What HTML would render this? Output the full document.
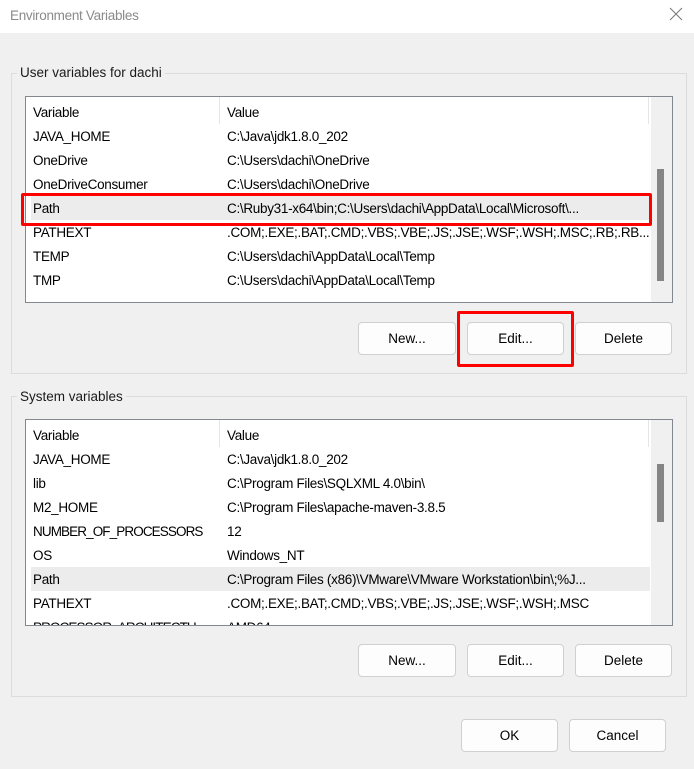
<!DOCTYPE html><html><head><style>
*{box-sizing:border-box;margin:0;padding:0}
body{width:694px;height:769px;background:#f0f0f0;font-family:"Liberation Sans",sans-serif;font-size:13.5px;color:#000;position:relative;overflow:hidden}
.a{position:absolute}
.title{left:0;top:0;width:694px;height:33px;background:#fff}
.group{border:1px solid #dcdcdc}
.legend{background:#f0f0f0;padding:0 3px;font-size:13.5px;color:#1a1a1a}
.list{background:#fff;border:1px solid #828790;overflow:hidden}
.row{position:absolute;left:5px;height:24px;line-height:26px;white-space:nowrap;width:620px;letter-spacing:-0.3px}
.row span{position:absolute;top:0}
.row .v{left:2px}.row .w{left:196px;width:424px;overflow:hidden}
.sb{background:#f0f0f0}
.btn{background:#fdfdfd;border:1px solid #d0d0d0;border-radius:4px;text-align:center;line-height:32px;font-size:13.5px}
.red{border:3px solid #ff0000;border-radius:2px}
</style></head><body>
<div class="a title"></div>
<div class="a" style="left:10px;top:8px;color:#8a8a8a;font-size:13.5px;letter-spacing:-0.3px">Environment Variables</div>
<svg class="a" style="left:669px;top:7px" width="14" height="14"><path d="M1 1L13 13M13 1L1 13" stroke="#777" stroke-width="1"/></svg>

<div class="a group" style="left:11px;top:73px;width:676px;height:301px"></div>
<div class="a legend" style="left:17px;top:65px">User variables for dachi</div>
<div class="a list" style="left:25px;top:96px;width:648px;height:207px">
 <div class="a sb" style="left:625px;top:0;width:22px;height:206px"></div>
 <div class="a" style="left:631px;top:72px;width:7px;height:112px;background:#858585"></div>
 <div class="a" style="left:193px;top:0;width:1px;height:27px;background:#e5e5e5"></div>
 <div class="a" style="left:622px;top:0;width:1px;height:27px;background:#e5e5e5"></div>
 <div class="a" style="left:5px;top:99px;width:619px;height:24px;background:#ececec"></div>
 <div class="row" style="top:3px"><span class="v">Variable</span><span class="w">Value</span></div>
 <div class="row" style="top:27px"><span class="v">JAVA_HOME</span><span class="w">C:\Java\jdk1.8.0_202</span></div>
 <div class="row" style="top:51px"><span class="v">OneDrive</span><span class="w">C:\Users\dachi\OneDrive</span></div>
 <div class="row" style="top:75px"><span class="v">OneDriveConsumer</span><span class="w">C:\Users\dachi\OneDrive</span></div>
 <div class="row" style="top:99px"><span class="v">Path</span><span class="w">C:\Ruby31-x64\bin;C:\Users\dachi\AppData\Local\Microsoft\...</span></div>
 <div class="row" style="top:123px"><span class="v">PATHEXT</span><span class="w">.COM;.EXE;.BAT;.CMD;.VBS;.VBE;.JS;.JSE;.WSF;.WSH;.MSC;.RB;.RB...</span></div>
 <div class="row" style="top:147px"><span class="v">TEMP</span><span class="w">C:\Users\dachi\AppData\Local\Temp</span></div>
 <div class="row" style="top:171px"><span class="v">TMP</span><span class="w">C:\Users\dachi\AppData\Local\Temp</span></div>
</div>
<div class="a red" style="left:21px;top:193px;width:631px;height:33px"></div>
<div class="a btn" style="left:358px;top:322px;width:98px;height:33px">New...</div>
<div class="a btn" style="left:467px;top:322px;width:97px;height:33px">Edit...</div>
<div class="a btn" style="left:575px;top:322px;width:97px;height:33px">Delete</div>
<div class="a red" style="left:457px;top:311px;width:117px;height:56px"></div>

<div class="a group" style="left:11px;top:396px;width:676px;height:301px"></div>
<div class="a legend" style="left:17px;top:389px">System variables</div>
<div class="a list" style="left:25px;top:419px;width:648px;height:207px">
 <div class="a sb" style="left:625px;top:0;width:22px;height:206px"></div>
 <div class="a" style="left:631px;top:44px;width:7px;height:58px;background:#858585"></div>
 <div class="a" style="left:193px;top:0;width:1px;height:27px;background:#e5e5e5"></div>
 <div class="a" style="left:622px;top:0;width:1px;height:27px;background:#e5e5e5"></div>
 <div class="a" style="left:5px;top:147px;width:619px;height:24px;background:#ececec"></div>
 <div class="row" style="top:3px"><span class="v">Variable</span><span class="w">Value</span></div>
 <div class="row" style="top:27px"><span class="v">JAVA_HOME</span><span class="w">C:\Java\jdk1.8.0_202</span></div>
 <div class="row" style="top:51px"><span class="v">lib</span><span class="w">C:\Program Files\SQLXML 4.0\bin\</span></div>
 <div class="row" style="top:75px"><span class="v">M2_HOME</span><span class="w">C:\Program Files\apache-maven-3.8.5</span></div>
 <div class="row" style="top:99px"><span class="v" style="letter-spacing:-0.9px">NUMBER_OF_PROCESSORS</span><span class="w">12</span></div>
 <div class="row" style="top:123px"><span class="v">OS</span><span class="w">Windows_NT</span></div>
 <div class="row" style="top:147px"><span class="v">Path</span><span class="w">C:\Program Files (x86)\VMware\VMware Workstation\bin\;%J...</span></div>
 <div class="row" style="top:171px"><span class="v">PATHEXT</span><span class="w">.COM;.EXE;.BAT;.CMD;.VBS;.VBE;.JS;.JSE;.WSF;.WSH;.MSC</span></div>
 <div class="row" style="top:195px"><span class="v" style="letter-spacing:-0.9px">PROCESSOR_ARCHITECTU</span><span class="w">AMD64</span></div>
</div>
<div class="a btn" style="left:358px;top:644px;width:98px;height:33px">New...</div>
<div class="a btn" style="left:467px;top:644px;width:97px;height:33px">Edit...</div>
<div class="a btn" style="left:575px;top:644px;width:97px;height:33px">Delete</div>

<div class="a btn" style="left:461px;top:719px;width:97px;height:33px">OK</div>
<div class="a btn" style="left:569px;top:719px;width:97px;height:33px">Cancel</div>
</body></html>
